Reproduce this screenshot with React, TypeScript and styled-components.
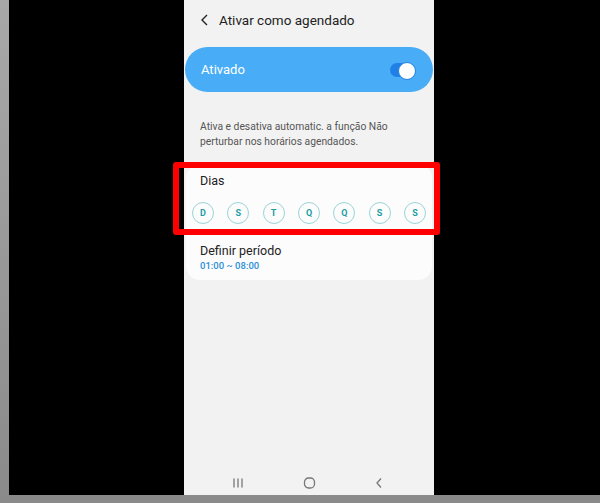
import { FC } from 'react';
import styled, { createGlobalStyle } from 'styled-components';

const GlobalStyle = createGlobalStyle`
  html, body {
    margin: 0;
    padding: 0;
    background: #000;
  }
  body {
    font-family: Roboto, "Noto Sans", "Liberation Sans", sans-serif;
  }
  * {
    box-sizing: border-box;
  }
`;

const Frame = styled.div`
  width: 600px;
  height: 503px;
  padding: 0 0 8px 9px;
  background: linear-gradient(to bottom, #a8a8a8, #8a8a8a);
  overflow: hidden;
`;

const Stage = styled.div`
  position: relative;
  height: 100%;
  background: #000;
  display: flex;
  padding-left: 175px;
`;

const Phone = styled.div`
  width: 250px;
  height: 100%;
  background: #f2f2f2;
  display: flex;
  flex-direction: column;
`;

const Header = styled.header`
  height: 40px;
  display: flex;
  align-items: center;
  padding-left: 16px;
  gap: 9px;
  color: #222;
  font-size: 13.5px;
`;

const MasterSwitch = styled.div`
  margin: 7px 1px 0;
  height: 45px;
  border-radius: 23px;
  background: #48adf6;
  display: flex;
  align-items: center;
  justify-content: space-between;
  padding: 0 18px 0 16px;
  color: #fff;
  font-size: 13px;
`;

const Toggle = styled.div<{ $on: boolean }>`
  position: relative;
  width: 25px;
  height: 14px;
  border-radius: 7px;
  background: ${({ $on }) => ($on ? '#1f80e6' : '#bbb')};

  &::after {
    content: '';
    position: absolute;
    top: -1px;
    ${({ $on }) => ($on ? 'right: -1px;' : 'left: -1px;')}
    width: 16px;
    height: 16px;
    border-radius: 50%;
    background: #fff;
    border: 1.5px solid #1f80e6;
  }
`;

const Description = styled.p`
  margin: 27px 0 0;
  padding: 0 16px;
  font-size: 10.3px;
  line-height: 15px;
  color: #555;
`;

const Card = styled.section`
  margin: 15px 2px 0;
  background: #fcfcfc;
  border-radius: 14px;
  padding: 9px 0 9px;
`;

const CardLabel = styled.div`
  padding: 0 14px;
  font-size: 12.5px;
  color: #222;
`;

const DayRow = styled.div`
  display: flex;
  justify-content: space-between;
  padding: 0 6px;
  margin: 14px 0 19px;
`;

const Day = styled.div`
  width: 22px;
  height: 22px;
  border-radius: 50%;
  border: 1px solid #9ad4d6;
  display: flex;
  align-items: center;
  justify-content: center;
  font-size: 9px;
  font-weight: 700;
  color: #1c9ca5;
`;

const SubValue = styled.div`
  padding: 0 14px;
  margin-top: 2px;
  font-size: 9.5px;
  font-weight: 500;
  color: #2a8fd6;
`;

const Spacer = styled.div`
  flex: 1;
`;

const NavBar = styled.nav`
  height: 24px;
  display: flex;
  align-items: center;
  justify-content: space-between;
  padding: 0 51px 0 48px;
  color: #777;
`;

const Highlight = styled.div`
  position: absolute;
  left: 164px;
  top: 162px;
  width: 267px;
  height: 73px;
  border: 6px solid #ff0000;
  border-radius: 3px;
  pointer-events: none;
`;

const days = ['D', 'S', 'T', 'Q', 'Q', 'S', 'S'];

const App: FC = () => {
  return (
    <>
      <GlobalStyle />
      <Frame>
        <Stage>
          <Phone>
            <Header>
              <svg width="10" height="12" viewBox="0 0 10 12">
                <path d="M7 1 L2 6 L7 11" fill="none" stroke="#222" strokeWidth="1.4" />
              </svg>
              <span>Ativar como agendado</span>
            </Header>
            <MasterSwitch>
              <span>Ativado</span>
              <Toggle $on />
            </MasterSwitch>
            <Description>
              Ativa e desativa automatic. a função Não perturbar nos horários agendados.
            </Description>
            <Card>
              <CardLabel>Dias</CardLabel>
              <DayRow>
                {days.map((d, i) => (
                  <Day key={i}>{d}</Day>
                ))}
              </DayRow>
              <CardLabel>Definir período</CardLabel>
              <SubValue>01:00 ~ 08:00</SubValue>
            </Card>
            <Spacer />
            <NavBar>
              <svg width="12" height="12" viewBox="0 0 12 12">
                <path d="M2 1.5 V10.5 M6 1.5 V10.5 M10 1.5 V10.5" stroke="#777" strokeWidth="1.3" />
              </svg>
              <svg width="13" height="12" viewBox="0 0 13 12">
                <rect x="1.5" y="1" width="10" height="10" rx="4" fill="none" stroke="#777" strokeWidth="1.3" />
              </svg>
              <svg width="8" height="12" viewBox="0 0 8 12">
                <path d="M6 1.5 L2 6 L6 10.5" fill="none" stroke="#777" strokeWidth="1.3" />
              </svg>
            </NavBar>
          </Phone>
          <Highlight />
        </Stage>
      </Frame>
    </>
  );
};

export default App;
